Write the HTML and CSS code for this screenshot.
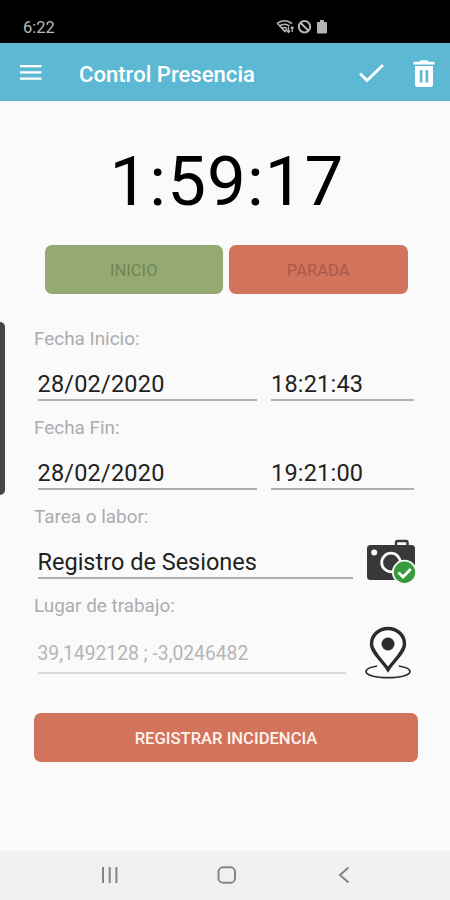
FILE: index.html
```
<!doctype html>
<html lang="es">
<head>
    <meta charset="UTF-8">
    <title>Control Presencia</title>
    <link rel="stylesheet" href="styles.css">
</head>
<body>
    <div class="status">
        <span class="clock">6:22</span>
        <svg class="status-icons" width="52" height="16" viewBox="0 0 52 16">
            <g fill="none" stroke="#b5b5b5" stroke-width="1.6">
                <path d="M1 4.500Q8.500 -1 16 4.500M3.500 7Q8.500 3.500 13.500 7M6 9.500Q8.500 7.500 11 9.500M1.500 4.500L9 12.500L11 10"/>
                <path d="M12.500 8v5M10.800 11.500l1.700 2l1.700-2M16.200 13V8M14.800 9.500l1.400-1.600l1.400 1.600" stroke-width="1.200"/>
                <circle cx="28.500" cy="7.700" r="5.700" stroke-width="2"/>
                <path d="M24.500 3.700l8 8" stroke-width="2"/>
            </g>
            <path d="M44 1h4v2h2q1 0 1 1v9.500q0 1-1 1h-8q-1 0-1-1V4q0-1 1-1h2z" fill="#b5b5b5"/>
        </svg>
    </div>
    <div class="toolbar">
        <svg class="menu" width="22" height="16" viewBox="0 0 22 16">
            <path d="M0 1.200h21.500M0 7.400h21.500M0 13.600h21.500" stroke="#fff" stroke-width="2.200"/>
        </svg>
        <h1>Control Presencia</h1>
        <svg class="check" width="26" height="20" viewBox="0 0 26 20">
            <path d="M2 10.500l7 7L25 2" fill="none" stroke="#fff" stroke-width="2.800"/>
        </svg>
        <svg class="trash" width="22" height="28" viewBox="0 0 22 28">
            <path d="M.5 1.800h6L8 .3h6l1.500 1.500h6v2.700H.5z" fill="#fff"/>
            <path d="M2 6h18v18.500q0 2.500-2.500 2.500h-13Q2 27 2 24.500zM6.800 10v12.500h2.600V10zM12.600 10v12.500h2.600V10z" fill="#fff" fill-rule="evenodd"/>
        </svg>
    </div>
    <div class="content">
        <div class="edge"></div>
        <div class="timer">1:59:17</div>
        <div class="actions">
            <button class="start" disabled>INICIO</button>
            <button class="stop" disabled>PARADA</button>
        </div>
        <div class="group">
            <div class="label">Fecha Inicio:</div>
            <div class="row">
                <div class="field date">28/02/2020</div>
                <div class="field time">18:21:43</div>
            </div>
        </div>
        <div class="group">
            <div class="label">Fecha Fin:</div>
            <div class="row">
                <div class="field date">28/02/2020</div>
                <div class="field time">19:21:00</div>
            </div>
        </div>
        <div class="group">
            <div class="label">Tarea o labor:</div>
            <div class="row">
                <div class="field task">Registro de Sesiones</div>
                <svg class="camera" width="50" height="46" viewBox="0 0 50 46">
                    <path d="M29 7V3.500q0-1.500 1.500-1.500h8.500q1.500 0 1.500 1.500V7" fill="none" stroke="#38383a" stroke-width="2.400"/>
                    <rect x="0" y="6" width="48" height="35" rx="3.500" fill="#38383a"/>
                    <circle cx="7.200" cy="13.500" r="3" fill="#fafafa"/>
                    <circle cx="24" cy="23.500" r="9.300" fill="none" stroke="#fafafa" stroke-width="2.800"/>
                    <circle cx="37.500" cy="33.300" r="12.500" fill="#fafafa"/>
                    <circle cx="37.500" cy="33.300" r="10.700" fill="#359b3b"/>
                    <path d="M31.500 33.500l4.500 4.500l7.800-8" fill="none" stroke="#fff" stroke-width="2.800"/>
                </svg>
            </div>
        </div>
        <div class="group">
            <div class="label">Lugar de trabajo:</div>
            <div class="row">
                <div class="field place">39,1492128 ; -3,0246482</div>
                <svg class="pin" width="48" height="54" viewBox="0 0 48 54">
                    <path d="M12 40C4.500 41.300 1 43.300 1 45.500C1 49.200 10.500 51.700 23 51.700S45 49.200 45 45.500C45 43.300 41.500 41.300 34 40" fill="none" stroke="#2b2b2b" stroke-width="1.700"/>
                    <path d="M23 43.500C18 35.500 6.500 26 6.500 18C6.500 9 14 2.500 23 2.500S39.500 9 39.500 18C39.500 26 28 35.500 23 43.500z" fill="#fafafa" stroke="#2b2b2b" stroke-width="3.400"/>
                    <circle cx="23" cy="18" r="6.500" fill="#2b2b2b"/>
                </svg>
            </div>
        </div>
        <button class="register">REGISTRAR INCIDENCIA</button>
    </div>
    <div class="navbar">
        <svg width="18" height="16" viewBox="0 0 18 16">
            <path d="M2 0v16M8.700 0v16M15.400 0v16" stroke="#858585" stroke-width="2"/>
        </svg>
        <svg class="home" width="20" height="18" viewBox="0 0 20 18">
            <rect x="1.500" y="1.300" width="16.500" height="15.400" rx="4.500" fill="none" stroke="#858585" stroke-width="2"/>
        </svg>
        <svg width="12" height="18" viewBox="0 0 12 18">
            <path d="M10.500 1.500L2 9l8.500 7.500" fill="none" stroke="#858585" stroke-width="2"/>
        </svg>
    </div>
</body>
</html>
```
FILE: styles.css
```
*{
    box-sizing: border-box;
}
body{
    margin: 0;
    height: 900px;
    display: flex;
    flex-direction: column;
    overflow: hidden;
    background: #fafafa;
    font-family: Roboto, "Liberation Sans", sans-serif;
}
svg{
    display: block;
    flex: none;
}
.status{
    height: 43px;
    padding: 12px 122px 0 23px;
    display: flex;
    justify-content: space-between;
    background: #000000;
}
.clock{
    font-size: 16.500px;
    line-height: 32px;
    color: #b9b9b9;
}
.status-icons{
    margin-top: 7px;
}
.toolbar{
    height: 58px;
    padding: 0 15px 0 20px;
    display: flex;
    align-items: center;
    background: #5db9d3;
}
.menu{
    margin-top: 2px;
}
.toolbar h1{
    flex: 1;
    margin: 4px 0 0 37px;
    font-size: 22.100px;
    font-weight: 500;
    line-height: 28px;
    color: #ffffff;
}
.check{
    margin-top: 2px;
    margin-right: 29px;
}
.trash{
    margin-top: 3px;
}
.content{
    flex: 1;
    position: relative;
    padding: 0 32px 0 34px;
}
/* edge panel handle over the left border */
.edge{
    position: absolute;
    left: 0;
    top: 221px;
    width: 4.500px;
    height: 173px;
    border-radius: 0 5px 5px 0;
    background: #464646;
}
.timer{
    height: 144.400px;
    padding: 39px 0 0 2px;
    font-size: 69px;
    line-height: 84px;
    letter-spacing: 1.1px;
    text-align: center;
    color: #000000;
}
button{
    height: 49px;
    padding: 1px 0 0;
    border: none;
    border-radius: 7px;
    font-family: inherit;
    font-size: 16.600px;
    line-height: 49px;
}
.actions{
    display: flex;
    gap: 6px;
    padding: 0 10.500px;
    margin-bottom: 33.600px;
}
.actions button{
    flex: 1;
}
.start{
    background: #94aa72;
    color: #718355;
}
.stop{
    background: #d2735b;
    color: #a9594a;
}
.group{
    height: 89px;
}
.label{
    height: 22px;
    font-size: 18.900px;
    line-height: 22px;
    color: #acacb0;
}
.row{
    display: flex;
    padding-left: 3.500px;
}
.field{
    height: 51px;
    padding-top: 21px;
    border-bottom: 2px solid #b0b0b0;
    font-size: 23.500px;
    line-height: 26px;
    letter-spacing: .2px;
    white-space: nowrap;
    color: #222222;
}
.date{
    width: 219px;
    margin-right: 14.500px;
}
.time{
    width: 142.500px;
}
.task{
    width: 315px;
    margin-right: 14.500px;
    letter-spacing: 0;
}
.camera{
    margin-top: 11px;
}
.place{
    width: 308.500px;
    height: 57px;
    padding-top: 24px;
    margin-right: 18.500px;
    border-color: #d9d9d9;
    font-size: 19.300px;
    letter-spacing: 0;
    color: #b5b5b5;
}
.pin{
    margin-top: 9px;
}
.register{
    display: block;
    width: 384px;
    margin-top: 29px;
    background: #d2735b;
    font-weight: 500;
    color: #fff3ee;
}
.navbar{
    height: 49px;
    padding: 0 100px 2px 101px;
    display: flex;
    align-items: center;
    justify-content: space-between;
    background: #f1f1f1;
}
.home{
    margin-right: 4px;
}
```
